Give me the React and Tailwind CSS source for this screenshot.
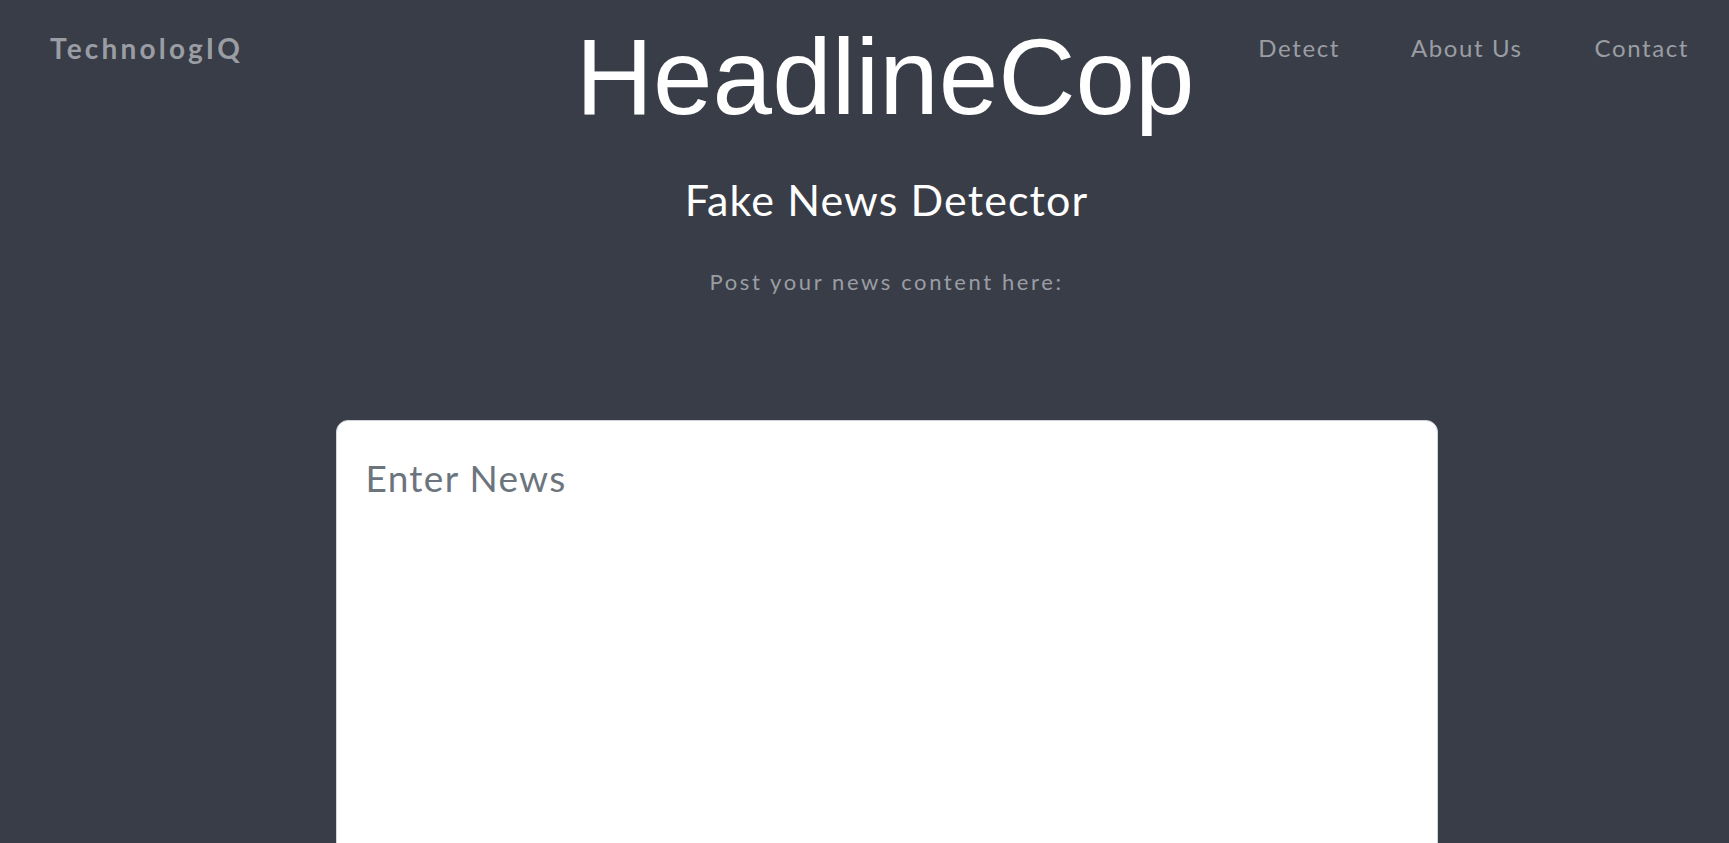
import React from "react";

export default function App() {
  const sans = { fontFamily: "Lato, 'Open Sans', sans-serif" };
  return (
    <div className="min-h-screen w-full bg-[#393d47]" style={sans}>
      <header className="flex items-start pt-[24px]">
        <div className="w-[512px] shrink-0 pl-[50px] pt-[10px]">
          <a className="text-[28px] leading-none font-bold tracking-[3.2px] text-[#9a9da4]">TechnologIQ</a>
        </div>
        <div className="flex-1 text-center">
          <h1
            className="text-[107px] leading-none text-white font-normal"
            style={{ fontFamily: "'Liberation Sans', Arial, sans-serif" }}
          >
            HeadlineCop
          </h1>
        </div>
        <nav className="flex shrink-0 pr-[40px] pt-[12px] text-[24px] leading-none tracking-[1.6px] text-[#9a9da4]">
          <a>Detect</a>
          <a className="ml-[71px]">About Us</a>
          <a className="ml-[72px]">Contact</a>
        </nav>
      </header>
      <main className="flex flex-col items-center pl-[44px]">
        <h2 className="mt-[47px] text-[43px] leading-none font-normal tracking-[1.1px] text-white">Fake News Detector</h2>
        <p className="mt-[50px] text-[22px] leading-none tracking-[2.6px] text-[#9a9da4]">Post your news content here:</p>
        <div className="mt-[127px] w-[1102px]">
          <textarea
            className="block h-[480px] w-full resize-none rounded-[12px] border border-[#ced4da] bg-white pl-[29px] pr-[28px] pt-[38px] text-[37px] leading-none tracking-[1.3px] text-[#495057] outline-none placeholder:text-[#6c757d]"
            placeholder="Enter News"
            style={sans}
          />
        </div>
      </main>
    </div>
  );
}
